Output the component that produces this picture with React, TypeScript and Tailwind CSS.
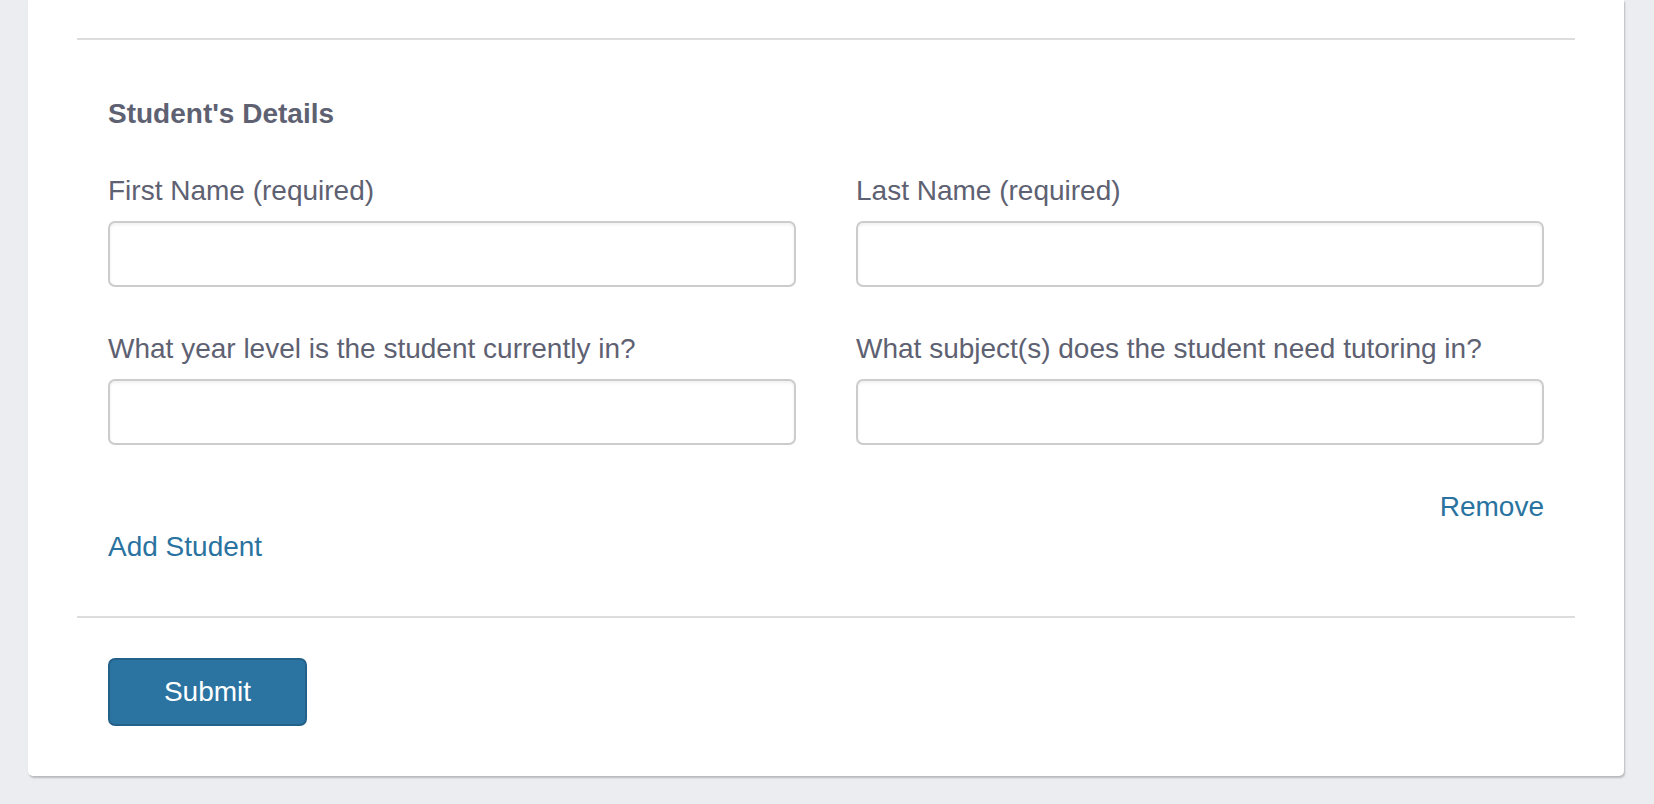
export default function App() {
  const font = { fontFamily: '"Liberation Sans", Arial, Helvetica, sans-serif' };
  return (
    <div
      className="min-h-[804px] w-full bg-[#ebedf0] pl-[28px] pr-[30px] text-[28px] leading-[40px] text-[#5e6172]"
      style={font}
    >
      <div className="w-[1596px] rounded-b-[5px] bg-white px-[49px] pt-[38px] pb-[50px] shadow-[1px_2px_2px_rgba(0,0,0,0.22)]">
        <div className="border-t-2 border-[#dddddd]" />

        <div className="px-[31px] pt-[54px]">
          <h3 className="font-bold">Student's Details</h3>

          <div className="mt-[37px] grid grid-cols-2 gap-x-[60px] gap-y-[42px]">
            <Field label="First Name (required)" />
            <Field label="Last Name (required)" />
            <Field label="What year level is the student currently in?" />
            <Field label="What subject(s) does the student need tutoring in?" />
          </div>

          <div className="mt-[42px] flex justify-end">
            <a href="#" className="text-[#2a73a0]">
              Remove
            </a>
          </div>
          <a href="#" className="block w-fit text-[#2a73a0]">
            Add Student
          </a>
        </div>

        <div className="mt-[49px] border-t-2 border-[#dddddd]" />

        <div className="px-[31px] pt-[40px]">
          <button className="h-[68px] w-[199px] rounded-[7px] border-2 border-[#24618a] bg-[#2b74a1] text-white">
            Submit
          </button>
        </div>
      </div>
    </div>
  );
}

function Field({ label }: { label: string }) {
  return (
    <div>
      <label className="block">{label}</label>
      <input
        type="text"
        className="mt-[10px] block h-[66px] w-full rounded-[7px] border-2 border-[#cccccc] bg-white shadow-[inset_0_2px_3px_rgba(0,0,0,0.06)] outline-none"
      />
    </div>
  );
}
